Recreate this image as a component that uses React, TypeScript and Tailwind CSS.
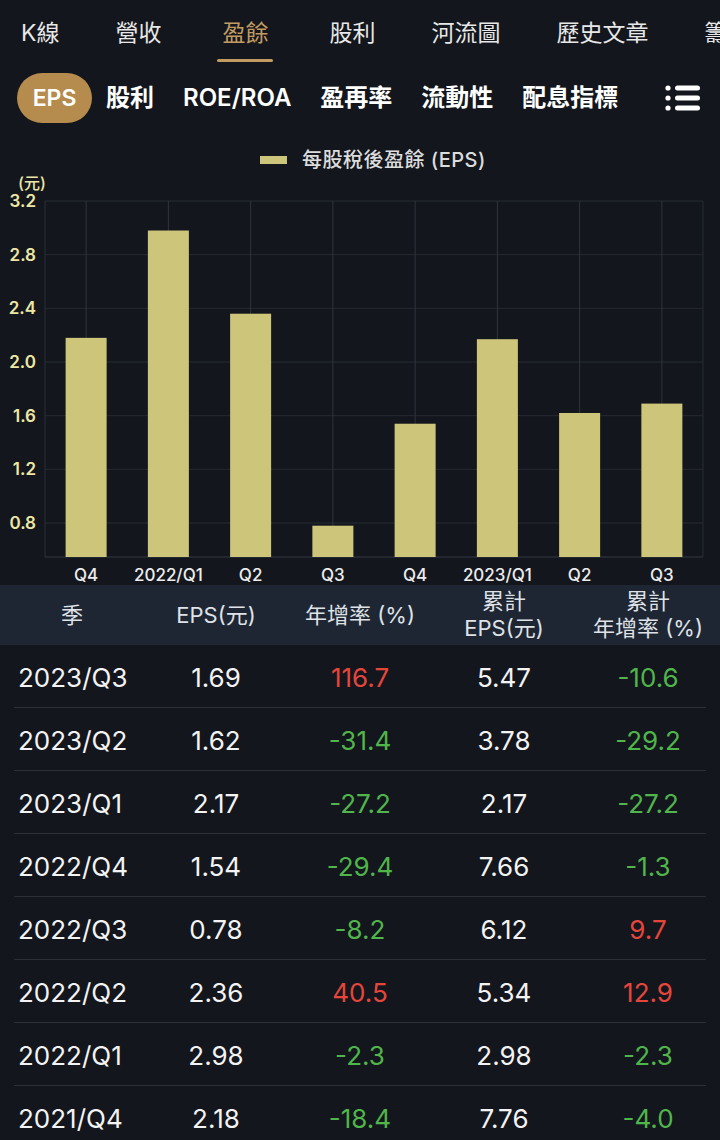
import React from 'react';

const navItems = ['K線', '營收', '盈餘', '股利', '河流圖', '歷史文章', '籌碼'];
const subTabs = ['股利', 'ROE/ROA', '盈再率', '流動性', '配息指標'];

const bars = [
  { label: 'Q4', value: 2.18 },
  { label: '2022/Q1', value: 2.98 },
  { label: 'Q2', value: 2.36 },
  { label: 'Q3', value: 0.78 },
  { label: 'Q4', value: 1.54 },
  { label: '2023/Q1', value: 2.17 },
  { label: 'Q2', value: 1.62 },
  { label: 'Q3', value: 1.69 },
];

const ticks = [3.2, 2.8, 2.4, 2.0, 1.6, 1.2, 0.8];

type Row = { q: string; eps: string; yoy: number; cum: string; cumYoy: number };

const rows: Row[] = [
  { q: '2023/Q3', eps: '1.69', yoy: 116.7, cum: '5.47', cumYoy: -10.6 },
  { q: '2023/Q2', eps: '1.62', yoy: -31.4, cum: '3.78', cumYoy: -29.2 },
  { q: '2023/Q1', eps: '2.17', yoy: -27.2, cum: '2.17', cumYoy: -27.2 },
  { q: '2022/Q4', eps: '1.54', yoy: -29.4, cum: '7.66', cumYoy: -1.3 },
  { q: '2022/Q3', eps: '0.78', yoy: -8.2, cum: '6.12', cumYoy: 9.7 },
  { q: '2022/Q2', eps: '2.36', yoy: 40.5, cum: '5.34', cumYoy: 12.9 },
  { q: '2022/Q1', eps: '2.98', yoy: -2.3, cum: '2.98', cumYoy: -2.3 },
  { q: '2021/Q4', eps: '2.18', yoy: -18.4, cum: '7.76', cumYoy: -4.0 },
];

// plot geometry (svg coords)
const LEFT = 45;
const RIGHT = 703;
const TOP = 31;
const BOTTOM = 387;
const PX_PER_UNIT = 134.17;
const SLOT = (RIGHT - LEFT) / bars.length;
const BAR_W = 41;

const yOf = (v: number) => TOP + (3.2 - v) * PX_PER_UNIT;

const fmt = (n: number) => n.toFixed(1);
const tone = (n: number) => (n >= 0 ? 'text-[#e5463c]' : 'text-[#50b54a]');

const MenuIcon = () => (
  <svg width="35" height="26" viewBox="0 0 35 26">
    <circle cx="3" cy="3" r="2.6" fill="#fff" />
    <circle cx="3" cy="13" r="2.6" fill="#fff" />
    <circle cx="3" cy="23" r="2.6" fill="#fff" />
    <rect x="10" y="0.5" width="25" height="5" rx="2.5" fill="#fff" />
    <rect x="10" y="10.5" width="25" height="5" rx="2.5" fill="#fff" />
    <rect x="10" y="20.5" width="25" height="5" rx="2.5" fill="#fff" />
  </svg>
);

const EpsChart = () => (
  <svg width="720" height="415" className="block">
    {ticks.map((t) => (
      <line key={t} x1={LEFT} x2={RIGHT} y1={yOf(t)} y2={yOf(t)} stroke="#262a33" strokeWidth="1" />
    ))}
    <line x1={LEFT} x2={LEFT} y1={TOP} y2={BOTTOM} stroke="#2a2e37" />
    <line x1={RIGHT} x2={RIGHT} y1={TOP} y2={BOTTOM} stroke="#262a33" />
    {bars.map((b, i) => {
      const cx = LEFT + SLOT / 2 + SLOT * i;
      return <line key={'v' + i} x1={cx} x2={cx} y1={TOP} y2={BOTTOM} stroke="#30343d" />;
    })}
    <line x1={LEFT} x2={RIGHT} y1={BOTTOM} y2={BOTTOM} stroke="#343842" />
    {bars.map((b, i) => {
      const cx = LEFT + SLOT / 2 + SLOT * i;
      const top = yOf(b.value);
      return (
        <rect key={'b' + i} x={cx - BAR_W / 2} y={top} width={BAR_W} height={BOTTOM - top} fill="#cdc67a" />
      );
    })}
    <text x="18" y="19" fontSize="16" fill="#ece6a8" fontWeight="500">
      (元)
    </text>
    {ticks.map((t) => (
      <text
        key={'t' + t}
        x="36"
        y={yOf(t) + 6}
        fontSize="17"
        fontWeight="600"
        fill="#ede7a4"
        textAnchor="end"
      >
        {t.toFixed(1)}
      </text>
    ))}
    {bars.map((b, i) => {
      const cx = LEFT + SLOT / 2 + SLOT * i;
      return (
        <text key={'x' + i} x={cx} y="411" fontSize="17" fontWeight="500" fill="#ececec" textAnchor="middle">
          {b.label}
        </text>
      );
    })}
  </svg>
);

export default function App() {
  return (
    <div className="w-[720px] h-[1140px] overflow-hidden bg-[#13161c] font-['Inter','Noto_Sans_CJK_TC',sans-serif] text-white">
      {/* top nav */}
      <div className="h-[66px] pt-[17px] pl-[21px] flex gap-[56px] whitespace-nowrap overflow-hidden">
        {navItems.map((n) => {
          const active = n === '盈餘';
          return (
            <div key={n} className="flex flex-col items-center shrink-0">
              <span className={`text-[23px] leading-[32px] ${active ? 'text-[#c19b62]' : 'text-[#e8e8e8]'}`}>
                {n}
              </span>
              {active && <div className="mt-[10px] w-[56px] h-[3px] rounded-full bg-[#c19b62]" />}
            </div>
          );
        })}
      </div>

      {/* sub tabs */}
      <div className="h-[64px] pt-[7px] flex items-start">
        <div className="ml-[17px] h-[50px] w-[75px] rounded-full bg-[#b68b4e] flex items-center justify-center text-[23px] font-semibold">
          EPS
        </div>
        <div className="ml-[14px] h-[50px] flex items-center gap-[29px]">
          {subTabs.map((s) => (
            <span key={s} className="text-[24px] font-semibold text-white whitespace-nowrap">
              {s}
            </span>
          ))}
        </div>
        <div className="ml-auto mr-[20px] h-[50px] flex items-center">
          <MenuIcon />
        </div>
      </div>

      {/* legend */}
      <div className="h-[40px] pt-[19px] pl-[260px] flex items-start">
        <div className="flex items-center h-[22px] gap-[15px]">
          <div className="w-[27px] h-[8px] bg-[#cdc67a]" />
          <span className="text-[20px] leading-[22px] tracking-[0.5px] text-[#dcdcdc] font-medium">
            每股稅後盈餘 (EPS)
          </span>
        </div>
      </div>

      <EpsChart />

      {/* table header */}
      <div className="h-[60px] bg-[#1f2633] grid grid-cols-5 items-center text-center text-[22px] leading-[27px] text-[#dfe2e7]">
        <div>季</div>
        <div>EPS(元)</div>
        <div>年增率 (%)</div>
        <div>
          累計
          <br />
          EPS(元)
        </div>
        <div>
          累計
          <br />
          年增率 (%)
        </div>
      </div>

      {rows.map((r) => (
        <div key={r.q}>
          <div className="h-[62px] pt-[3px] grid grid-cols-5 items-center text-[26px] text-[#f3f3f3]">
            <div className="pl-[18px]">{r.q}</div>
            <div className="text-center">{r.eps}</div>
            <div className={`text-center ${tone(r.yoy)}`}>{fmt(r.yoy)}</div>
            <div className="text-center">{r.cum}</div>
            <div className={`text-center ${tone(r.cumYoy)}`}>{fmt(r.cumYoy)}</div>
          </div>
          <div className="mx-[14px] h-px bg-[#2b2f38]" />
        </div>
      ))}
    </div>
  );
}
